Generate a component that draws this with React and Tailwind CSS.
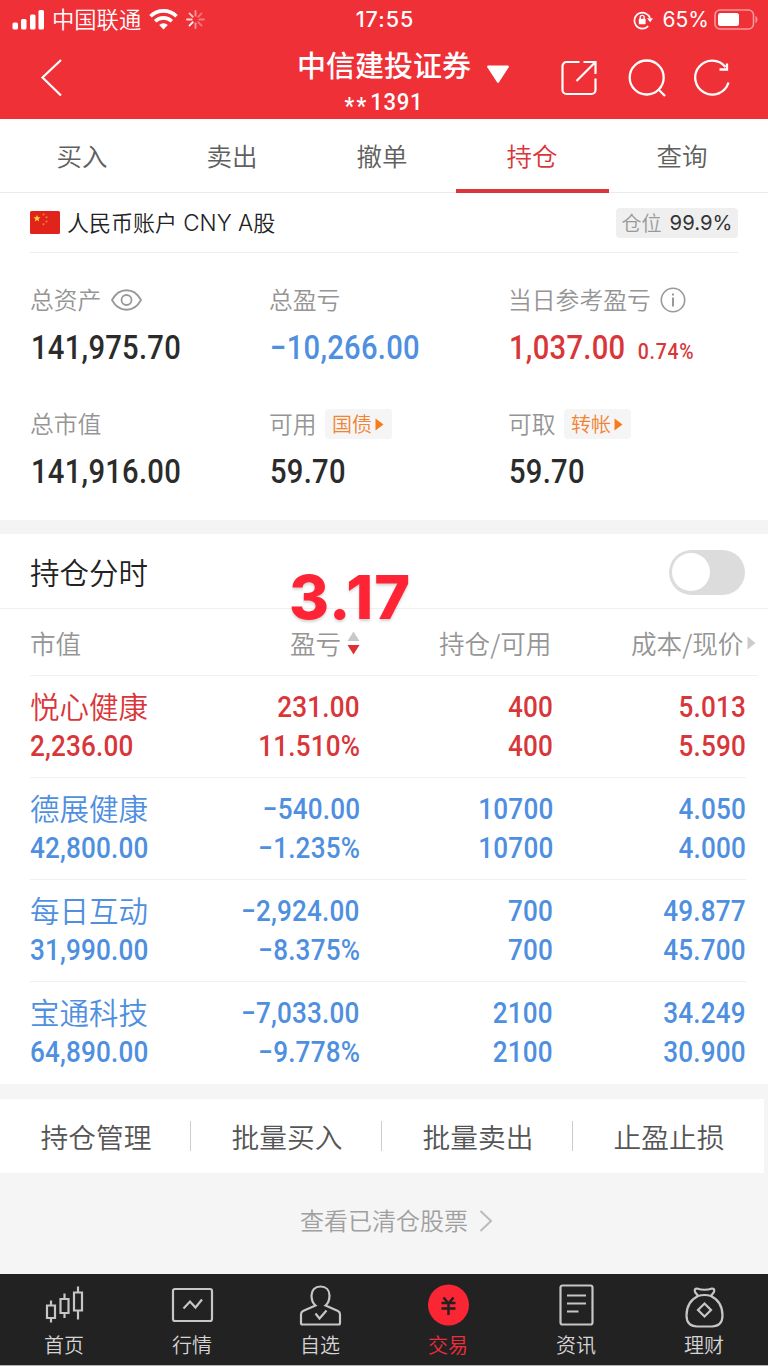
import { useState } from "react";

const red = "text-[#d9363a]";
const blue = "text-[#4f8fdf]";

const holdings = [
  { name: "悦心健康", value: "2,236.00", profit: "231.00", rate: "11.510%", amount: "400", usable: "400", cost: "5.013", price: "5.590", up: true },
  { name: "德展健康", value: "42,800.00", profit: "−540.00", rate: "−1.235%", amount: "10700", usable: "10700", cost: "4.050", price: "4.000" },
  { name: "每日互动", value: "31,990.00", profit: "−2,924.00", rate: "−8.375%", amount: "700", usable: "700", cost: "49.877", price: "45.700" },
  { name: "宝通科技", value: "64,890.00", profit: "−7,033.00", rate: "−9.778%", amount: "2100", usable: "2100", cost: "34.249", price: "30.900" },
];

const StatusBar = () => (
  <div className="h-[39px] grid grid-cols-3 items-center pl-3 pr-[10px]">
    <div className="flex items-center">
      <svg width="32" height="20" viewBox="0 0 32 20" fill="#fff">
        <rect x="0.5" y="12.5" width="5.5" height="7" rx="1.5" />
        <rect x="9" y="9" width="5.5" height="10.5" rx="1.5" />
        <rect x="18" y="4.5" width="5.5" height="15" rx="1.5" />
        <rect x="26.5" y="0" width="5.5" height="19.5" rx="1.5" />
      </svg>
      <span className="ml-[8px] pt-[3px] text-[22.3px] font-[350]">中国联通</span>
      <svg className="ml-[8px]" width="29" height="21" viewBox="0 0 29 21" fill="none" stroke="#fff" strokeWidth="3.6">
        <path d="M1.5 7.2a18.6 18.6 0 0 1 26 0" />
        <path d="M6.2 12.2a12 12 0 0 1 16.6 0" />
        <path d="M14.5 20.5l-4.3-4.4a6.2 6.2 0 0 1 8.6 0z" fill="#fff" stroke="none" />
      </svg>
      <svg className="ml-[8px]" width="19" height="19" viewBox="0 0 20 20" stroke="#fff" strokeWidth="1.9" strokeLinecap="round">
        <path d="M10 1v5" opacity=".5" />
        <path d="M16.4 3.6l-3.5 3.5" opacity=".35" />
        <path d="M19 10h-5" opacity=".35" />
        <path d="M16.4 16.4l-3.5-3.5" opacity=".35" />
        <path d="M10 19v-5" opacity=".5" />
        <path d="M3.6 16.4l3.5-3.5" opacity=".95" />
        <path d="M1 10h5" opacity=".8" />
        <path d="M3.6 3.6l3.5 3.5" opacity=".7" />
      </svg>
    </div>
    <div className="text-center text-[21.5px] font-medium tracking-[1px] font-[Inter]">17:55</div>
    <div className="flex items-center justify-end">
      <svg width="20" height="20" viewBox="0 0 20 20" fill="none" stroke="#fff" strokeWidth="1.7">
        <path d="M15.2 16.2A8 8 0 1 1 17 8" />
        <path d="M14 8.2h6l-2.8 4z" fill="#fff" stroke="none" />
        <rect x="5.8" y="8.8" width="6.8" height="5.4" rx=".6" fill="#fff" stroke="none" />
        <path d="M7.2 9V7.3a2 2 0 0 1 4 0V9" strokeWidth="1.3" />
      </svg>
      <span className="ml-[10px] text-[21px] font-[Inter]">65%</span>
      <svg className="ml-[5px]" width="44" height="22" viewBox="0 0 44 22" fill="none">
        <rect x="1" y="1" width="38.500" height="19" rx="5" stroke="#fff" strokeOpacity=".5" strokeWidth="1.6" />
        <rect x="4" y="4" width="21" height="13" rx="2.5" fill="#fff" />
        <path d="M41.500 7c2.6 1 2.6 6 0 7z" fill="#fff" fillOpacity=".5" />
      </svg>
    </div>
  </div>
);

const Header = () => (
  <header className="bg-[#ef3037] text-white h-[119px]">
    <StatusBar />
    <div className="flex h-[80px] items-start">
      <svg className="ml-[40px] mt-[19px]" width="24" height="40" viewBox="0 0 24 40" fill="none" stroke="#fff" strokeWidth="2.2">
        <path d="M21 2L2.5 19.5 21 37.5" />
      </svg>
      <div className="ml-[233px] w-[174px] flex flex-col items-center">
        <div className="h-[50px] pt-[6px] leading-[44px] text-[29px] font-medium whitespace-nowrap">中信建投证券</div>
        <div className="leading-[26px] text-[24.5px] font-[Roboto] font-medium scale-x-90 tracking-[0.8px]">
          <span className="relative top-[4px] mr-[2px] tracking-[2.5px]">**</span>1391
        </div>
      </div>
      <svg className="ml-[15px] mt-[26px]" width="24" height="19" viewBox="0 0 24 19" fill="#fff">
        <path d="M2 0.5h20q1.6 0.4 0.7 1.8L13 17.3q-1 1.2-2 0L1.3 2.3Q0.6 0.8 2 0.5z" />
      </svg>
      <svg className="ml-[51px] mt-[21px]" width="36" height="36" viewBox="0 0 36 36" fill="none" stroke="#fff" strokeWidth="2.2">
        <path d="M18.5 2H5.5a4 4 0 0 0-4 4v24a4 4 0 0 0 4 4h25a4 4 0 0 0 4-4V18.5" />
        <path d="M22.5 2h12v12M34 2.5L15.5 21" />
      </svg>
      <svg className="ml-[31px] mt-[20px]" width="40" height="38" viewBox="0 0 40 38" fill="none" stroke="#fff" strokeWidth="2.3">
        <circle cx="18.7" cy="18.5" r="17" />
        <path d="M30.5 30.5l6.5 6.5" />
      </svg>
      <svg className="ml-[26px] mt-[20px]" width="37" height="38" viewBox="0 0 37 38" fill="none" stroke="#fff" strokeWidth="2.3">
        <path d="M34.5 23.5A17 17 0 1 1 31.5 8" />
        <path d="M33 4.500v6h-7.500" />
      </svg>
    </div>
  </header>
);

const Tabs = () => {
  const [active, setActive] = useState("持仓");

  return (
    <nav className="h-[74px] pl-[5px] pr-[9px] flex border-b border-[#ebebeb]">
      {["买入", "卖出", "撤单", "持仓", "查询"].map((t) => (
        <button
          key={t}
          onClick={() => setActive(t)}
          className={`relative w-[150px] first:ml-[2px] pt-[3px] text-[25.5px] font-[350] ${t === active ? red : "text-[#606060]"}`}
        >
          {t}
          {t === active && (
            <span className="absolute -left-px -right-[2px] -bottom-[1px] h-[4px] bg-[#dc363c]" />
          )}
        </button>
      ))}
    </nav>
  );
};

const Account = () => (
  <div className="mx-[30px] h-[60px] flex items-center border-b border-[#ededed]">
    <svg width="30" height="23" viewBox="0 0 30 23">
      <rect width="30" height="23" rx="1.5" fill="#e0241b" />
      <path d="M7 3.8l.9 2.4 2.6.1-2 1.6.7 2.5L7 9l-2.2 1.4.7-2.5-2-1.6 2.6-.1z" fill="#fbd935" />
      <g fill="#ee8a2c">
        <circle cx="13.5" cy="3.5" r="1" />
        <circle cx="16.5" cy="6.3" r="1" />
        <circle cx="16.5" cy="10.5" r="1" />
        <circle cx="13.5" cy="13.3" r="1" />
      </g>
    </svg>
    <span className="ml-[7px] text-[22px] font-[350] text-[#222] font-[Inter,'Noto_Sans_CJK_SC',sans-serif] whitespace-pre">
      人民币账户 <span className="text-[22.5px]">CNY A</span>股
    </span>
    <span className="ml-auto h-[30px] w-[122px] rounded bg-[#efefef] flex items-center justify-center gap-[8px] whitespace-nowrap">
      <span className="pt-[3px] text-[20px] font-[350] text-[#999]">仓位</span>
      <span className="pt-px text-[20.3px] text-[#333] font-[Inter]">99.9%</span>
    </span>
  </div>
);

const Stat = ({ label, extra, value, rate, color = "text-[#2b2b2b]" }) => (
  <div>
    <div className="h-10 flex items-center text-[23.8px] font-[350] text-[#959595] whitespace-nowrap">
      <span className="pt-px">{label}</span>
      {extra}
    </div>
    <div className={`h-14 ml-px flex items-baseline origin-left scale-x-[0.885] leading-[56px] text-[33px] font-medium font-[Roboto] tracking-[0.3px] ${color}`}>
      {value}
      {rate && <span className="ml-[14px] text-[22px] tracking-[0.8px]">{rate}</span>}
    </div>
  </div>
);

const Badge = ({ children }) => (
  <span className="ml-[8px] h-[30px] w-[67px] rounded bg-[#f5f5f5] flex items-center justify-center gap-[3px] text-[20px] text-[#f28330]">
    <span className="pt-[2px]">{children}</span>
    <svg width="9" height="13" viewBox="0 0 9 13" fill="#f97c1c">
      <path d="M0.5 0.5v12L8.5 6.5z" />
    </svg>
  </span>
);

const Stats = () => (
  <section className="pl-[30px] pt-[27px] pb-[20px] grid grid-cols-[239px_239px_1fr] gap-y-7">
    <Stat
      label="总资产"
      value="141,975.70"
      extra={
        <svg className="ml-[10px]" width="31" height="22" viewBox="0 0 31 22" fill="none" stroke="#999" strokeWidth="1.8">
          <path d="M1 11C8-2 23-2 30 11 23 24 8 24 1 11z" />
          <circle cx="15.5" cy="11" r="5" />
        </svg>
      }
    />
    <Stat label="总盈亏" value="−10,266.00" color={blue} />
    <Stat
      label="当日参考盈亏"
      value="1,037.00"
      rate="0.74%"
      color={red}
      extra={
        <svg className="ml-[9px]" width="26" height="26" viewBox="0 0 26 26" fill="none" stroke="#999" strokeWidth="1.6">
          <circle cx="13" cy="13" r="11.7" />
          <path d="M13 10.5v9M13 6.5v2" strokeWidth="2" />
        </svg>
      }
    />
    <Stat label="总市值" value="141,916.00" />
    <Stat label="可用" value="59.70" extra={<Badge>国债</Badge>} />
    <Stat label="可取" value="59.70" extra={<Badge>转帐</Badge>} />
  </section>
);

const Chart = () => {
  const [on, setOn] = useState(false);

  return (
    <div className="relative h-[75px] pl-[30px] pr-[23px] flex items-center justify-between border-b border-[#efefef]">
      <span className="pt-[6px] text-[29.5px] font-[350] text-[#222]">持仓分时</span>
      <button
        onClick={() => setOn(!on)}
        className={`mt-[2px] w-[76px] h-[45px] p-[3px] rounded-full flex items-center ${on ? "justify-end bg-[#dc363c]" : "bg-[#dcdcdc]"}`}
      >
        <span className="w-[38px] h-[38px] rounded-full bg-white" />
      </button>
      <span className="absolute left-[289px] top-[38px] leading-[50px] tracking-[1.2px] text-[61px] font-extrabold text-[#ff2435] font-[Inter] [text-shadow:0_2px_3px_rgba(0,0,0,0.18)]">
        3.17
      </span>
    </div>
  );
};

const Num = ({ children, left }) => (
  <span className={left ? "text-left" : ""}>
    <span className={`inline-block scale-x-90 ${left ? "origin-left" : "origin-right"}`}>{children}</span>
  </span>
);

const Holding = ({ item }) => (
  <div
    className={`ml-[30px] mr-[22px] h-[102px] pt-3 grid grid-cols-[137px_193px_193px_193px] grid-rows-[39px_39px] leading-[39px] border-b border-[#f1f1f1] last:border-transparent text-[29px] font-medium font-[Roboto,'Noto_Sans_CJK_SC',sans-serif] tracking-[0.2px] text-right whitespace-nowrap ${item.up ? red : blue}`}
  >
    <span className="pt-px text-left text-[29.5px] font-[350] tracking-normal">{item.name}</span>
    <Num>{item.profit}</Num>
    <Num>{item.amount}</Num>
    <Num>{item.cost}</Num>
    <Num left>{item.value}</Num>
    <Num>{item.rate}</Num>
    <Num>{item.usable}</Num>
    <Num>{item.price}</Num>
  </div>
);

const Holdings = () => (
  <section>
    <div className="ml-[30px] mr-[10px] h-[67px] pt-[2px] flex items-center text-[25.6px] font-[350] text-[#959595] border-b border-[#f1f1f1] whitespace-nowrap font-['Noto_Sans_CJK_SC',sans-serif]">
      <span className="w-[260px]">市值</span>
      <span className="w-[149px] flex items-center gap-[6px]">
        盈亏
        <svg width="13" height="24" viewBox="0 0 13 24">
          <path d="M6.5 0.5L12.5 10H0.5z" fill="#c8c8c8" />
          <path d="M0.5 14h12L6.5 23.5z" fill="#df3033" />
        </svg>
      </span>
      <span className="w-[192px]">持仓/可用</span>
      <span className="flex items-center gap-[4px]">
        成本/现价
        <svg width="9" height="14" viewBox="0 0 9 14" fill="#ccc">
          <path d="M0.5 0.5v13L8.5 7z" />
        </svg>
      </span>
    </div>
    <div>
      {holdings.map((h) => (
        <Holding key={h.name} item={h} />
      ))}
    </div>
  </section>
);

const Actions = () => (
  <div className="bg-[#f5f5f5] pt-[15px] h-[190px]">
    <div className="w-[764px] h-[74px] bg-white grid grid-cols-4 items-center text-[27.7px] font-[350] text-[#555]">
      {["持仓管理", "批量买入", "批量卖出", "止盈止损"].map((t) => (
        <button key={t} className="h-[30px] pl-[2px] pt-[5px] flex items-center justify-center border-r border-[#ccc] last:border-transparent">
          {t}
        </button>
      ))}
    </div>
    <div className="mt-[28px] h-10 pl-[25px] flex items-center justify-center gap-[11px] text-[24px] font-[350] text-[#a0a0a0]">
      <span className="pt-px">查看已清仓股票</span>
      <svg width="14" height="22" viewBox="0 0 14 22" fill="none" stroke="#bbb" strokeWidth="2">
        <path d="M1.5 1L12 11 1.5 21" />
      </svg>
    </div>
  </div>
);

const icons = {
  首页: (
    <path d="M3 20.500h8v12.500h-8zM7 15.500v5M7 33v4.500M16.500 14h8v14h-8zM20.500 8.500v5.500M20.500 28v5M30 7.500h8v18h-8zM34 1.500v6M34 25.500v9" />
  ),
  行情: (
    <>
      <rect x="1" y="4" width="39" height="32" rx="2" />
      <path d="M11.5 23.5l6.500-7 5.500 6 6.500-8" />
    </>
  ),
  自选: (
    <>
      <path d="M15.500 20.500C12.500 18 11.500 14.500 11.500 10.500 11.500 5 15 1.500 20.500 1.500S29.500 5 29.500 10.500C29.500 14.500 28.500 18 25.500 20.500L38 26Q40 27 40 29.500V38Q40 39.500 38.500 39.500H2.500Q1 39.500 1 38V29.500Q1 27 3 26z" />
      <path d="M15.500 28.500l4 5 7-8" />
    </>
  ),
  交易: (
    <>
      <circle cx="20.500" cy="20" r="20.500" fill="#fb2634" stroke="none" />
      <path d="M15.500 12.500l5 6 5-6M13.500 18h14M13.500 23.500h14M20.500 18v12" stroke="#222" strokeWidth="2.500" />
    </>
  ),
  资讯: (
    <>
      <rect x="4.500" y="0.500" width="32" height="39" rx="2" />
      <path d="M11 10.500h19M11 18.500h19M11 26.500h11.500" />
    </>
  ),
  理财: (
    <>
      <path d="M14 11L11 7Q10 3.500 13 3.500 20.500 6 28 3.500 31 3.500 30 7L27 11Q20.500 9 14 11z" />
      <path d="M14 11C6 15 2.500 22.500 2.500 30.500Q2.500 41 13 41.500H28Q38.500 41 38.500 30.500C38.500 22.500 35 15 27 11" />
      <path d="M20.500 18.500l6.500 6.500-6.500 6.500-6.500-6.500z" />
    </>
  ),
};

const NavBar = () => (
  <nav className="h-[92px] bg-[#222] border-b border-[#b5b5b5] grid grid-cols-6">
    {Object.keys(icons).map((t) => (
      <button
        key={t}
        className={`pt-[10px] flex flex-col items-center text-[20px] leading-[30px] font-[350] ${t === "交易" ? "text-[#ef2d3c]" : "text-[#d4d4d4]"}`}
      >
        <svg width="43" height="44" viewBox="-1 -1 43 44" fill="none" stroke="#c6c6c6" strokeWidth="2.2">
          {icons[t]}
        </svg>
        <span className="mt-[3px]">{t}</span>
      </button>
    ))}
  </nav>
);

export default function App() {
  return (
    <div className="w-[768px] h-[1366px] overflow-hidden bg-white font-['Liberation_Sans','Noto_Sans_CJK_SC',sans-serif]">
      <Header />
      <Tabs />
      <Account />
      <Stats />
      <div className="h-[14px] bg-[#f4f4f4]" />
      <Chart />
      <Holdings />
      <Actions />
      <NavBar />
    </div>
  );
}
